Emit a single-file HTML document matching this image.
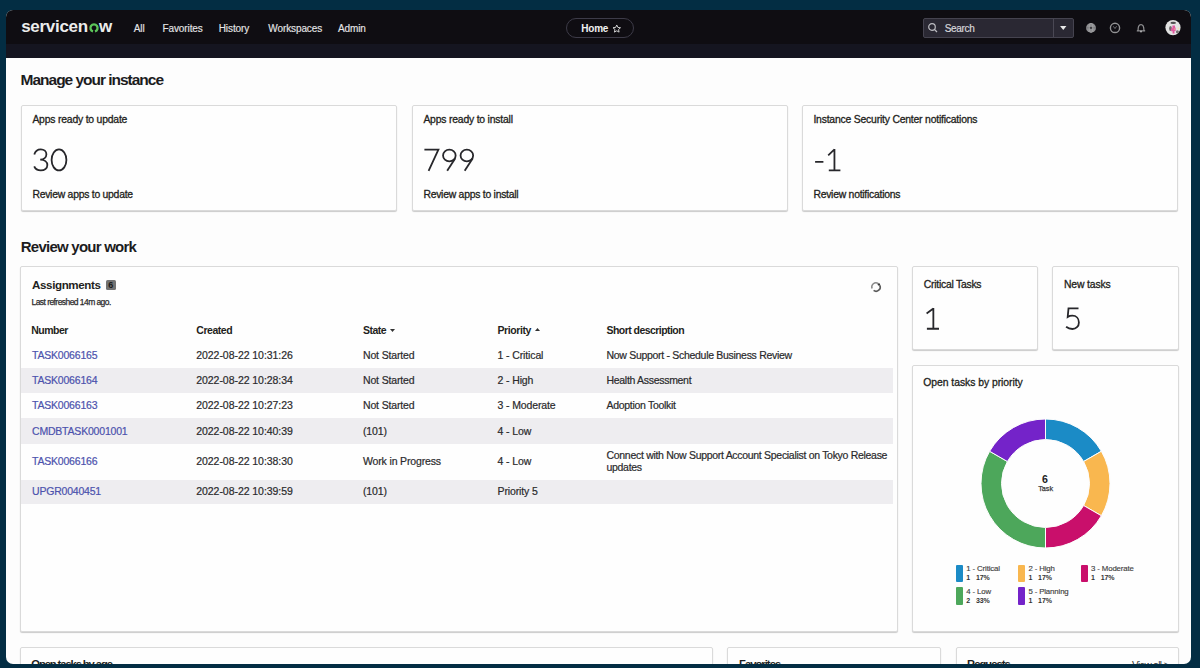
<!DOCTYPE html>
<html><head><meta charset="utf-8"><style>
html,body{margin:0;padding:0;}
body{width:1200px;height:668px;overflow:hidden;background:#032d43;position:relative;font-family:"Liberation Sans",sans-serif;}
#frame{position:absolute;left:6px;top:10px;width:1185px;height:653.6px;border-radius:7px;overflow:hidden;background:#fdfdfd;}
#nav{position:absolute;left:0;top:0;width:1186px;height:34px;background:#0f0d12;}
#band{position:absolute;left:0;top:34px;width:1186px;height:14px;background:#151520;}
#content{position:absolute;left:-6px;top:-10px;width:1200px;height:668px;}
.t{position:absolute;line-height:1;white-space:nowrap;}
.b{position:absolute;}
.card{position:absolute;background:#fefefe;border:1px solid #dadada;border-radius:2px;box-sizing:border-box;box-shadow:0 1px 1px rgba(0,0,0,.2);}
</style></head><body>
<div id="frame"><div id="nav"></div><div id="band"></div>
<div id="content">
<div class="t" style="left:21.20px;top:18.11px;font-size:17px;color:#ececec;font-weight:700;letter-spacing:-0.3px;">servicen</div>
<svg class="b" style="left:88px;top:21.6px" width="12" height="12" viewBox="0 0 12 12"><path d="M5 9.45A3.6 3.6 0 1 1 7 9.45" fill="none" stroke="#5cc55a" stroke-width="2.4"/></svg>
<div class="t" style="left:99.00px;top:18.11px;font-size:17px;color:#ececec;font-weight:700;letter-spacing:0px;">w</div>
<div class="t" style="left:133.75px;top:23.93px;font-size:10px;color:#e4e4e6;font-weight:400;letter-spacing:-0.1px;-webkit-text-stroke:0.15px #e4e4e6;">All</div>
<div class="t" style="left:162.50px;top:23.93px;font-size:10px;color:#e4e4e6;font-weight:400;letter-spacing:-0.1px;-webkit-text-stroke:0.15px #e4e4e6;">Favorites</div>
<div class="t" style="left:218.75px;top:23.93px;font-size:10px;color:#e4e4e6;font-weight:400;letter-spacing:-0.1px;-webkit-text-stroke:0.15px #e4e4e6;">History</div>
<div class="t" style="left:268.30px;top:23.93px;font-size:10px;color:#e4e4e6;font-weight:400;letter-spacing:-0.1px;-webkit-text-stroke:0.15px #e4e4e6;">Workspaces</div>
<div class="t" style="left:337.90px;top:23.93px;font-size:10px;color:#e4e4e6;font-weight:400;letter-spacing:-0.1px;-webkit-text-stroke:0.15px #e4e4e6;">Admin</div>
<div class="b" style="left:566px;top:18px;width:68px;height:20px;border:1px solid #3d3b48;border-radius:11px;box-sizing:border-box;"></div>
<div class="t" style="left:581.25px;top:24.14px;font-size:10px;color:#f0f0f0;font-weight:700;letter-spacing:-0.2px;">Home</div>
<svg class="b" style="left:612px;top:23.6px" width="9.5" height="9.5" viewBox="0 0 24 24"><path d="M12 2.5l2.9 6.2 6.6.7-5 4.5 1.4 6.6L12 17.2l-5.9 3.3 1.4-6.6-5-4.5 6.6-.7z" fill="none" stroke="#d8d8d8" stroke-width="2.4" stroke-linejoin="round"/></svg>
<div class="b" style="left:923px;top:18px;width:151px;height:20px;background:#2a2833;border:1px solid #45434f;border-radius:2px;box-sizing:border-box;"></div>
<div class="b" style="left:1053px;top:19px;width:1px;height:18px;background:#4a4854;"></div>
<svg class="b" style="left:927px;top:22px" width="12" height="12" viewBox="0 0 12 12"><circle cx="5" cy="5" r="3.3" fill="none" stroke="#bdbdc2" stroke-width="1.2"/><path d="M7.4 7.4L10 10" stroke="#bdbdc2" stroke-width="1.3"/></svg>
<div class="t" style="left:944.70px;top:24.14px;font-size:10px;color:#d6d6da;font-weight:400;letter-spacing:-0.3px;-webkit-text-stroke:0.2px #d6d6da;">Search</div>
<svg class="b" style="left:1060px;top:26px" width="6.5" height="4" viewBox="0 0 8 5"><path d="M0 0h8L4 5z" fill="#e8e8e8"/></svg>
<svg class="b" style="left:1085.2px;top:22.1px" width="12" height="12" viewBox="0 0 12 12"><circle cx="6" cy="5.9" r="4.9" fill="#8f8f92"/><path d="M1.3 5.9h9.4" stroke="#6a6a6e" stroke-width=".8"/><ellipse cx="6" cy="5.9" rx="1.9" ry="4.7" fill="none" stroke="#a6a6a8" stroke-width=".7"/><circle cx="6" cy="5.9" r="1.1" fill="#3a3a3e"/></svg>
<svg class="b" style="left:1109.3px;top:22.1px" width="12" height="12" viewBox="0 0 12 12"><circle cx="6" cy="5.9" r="4.6" fill="none" stroke="#929294" stroke-width="1.4"/><path d="M4.3 4.3L6 6.6L7.6 4.2" fill="none" stroke="#6e6e72" stroke-width="1"/></svg>
<svg class="b" style="left:1134.5px;top:22px" width="12" height="12" viewBox="0 0 12 12"><path d="M3.1 8.1C3.1 5.3 3.6 2.6 6 2.6C8.4 2.6 8.9 5.3 8.9 8.1L9.7 8.9H2.3Z" fill="none" stroke="#8e8e90" stroke-width="1.25" stroke-linejoin="round"/><circle cx="6" cy="9.6" r="1" fill="#b0b0b2"/></svg>
<svg class="b" style="left:1164.9px;top:20.4px" width="16" height="16" viewBox="0 0 16 16"><circle cx="8" cy="7.6" r="7.6" fill="#e2e2e2"/><ellipse cx="8.2" cy="2.9" rx="2.8" ry="1.1" fill="#4e4e4e"/><ellipse cx="5.5" cy="8.6" rx="1.4" ry="2.5" fill="#6a6a6a"/><ellipse cx="12.4" cy="11.8" rx="1.5" ry="1.5" fill="#707070"/><path d="M7.4 5.4h2.6v2.2h.6v3.4h-1.1v2.5H7.6v-2.2H6.1V8.2h1.3z" fill="#e0579f"/><circle cx="9.4" cy="9" r=".6" fill="#f2d070"/><ellipse cx="13.4" cy="8.4" rx=".7" ry="1" fill="#eee2b0"/></svg>
<div class="t" style="left:20.60px;top:72.18px;font-size:15.5px;color:#1c1c1e;font-weight:700;letter-spacing:-1.02px;">Manage your instance</div>
<div class="card" style="left:21px;top:105px;width:376px;height:106px;"></div>
<div class="t" style="left:32.40px;top:114.60px;font-size:10.4px;color:#1e1e20;font-weight:400;letter-spacing:-0.2px;-webkit-text-stroke:0.3px currentColor;">Apps ready to update</div>
<div class="t" style="left:32.40px;top:189.60px;font-size:10.4px;color:#1e1e20;font-weight:400;letter-spacing:-0.25px;-webkit-text-stroke:0.3px currentColor;">Review apps to update</div>
<div class="card" style="left:412px;top:105px;width:376px;height:106px;"></div>
<div class="t" style="left:423.40px;top:114.60px;font-size:10.4px;color:#1e1e20;font-weight:400;letter-spacing:-0.2px;-webkit-text-stroke:0.3px currentColor;">Apps ready to install</div>
<div class="t" style="left:423.40px;top:189.60px;font-size:10.4px;color:#1e1e20;font-weight:400;letter-spacing:-0.25px;-webkit-text-stroke:0.3px currentColor;">Review apps to install</div>
<div class="card" style="left:802px;top:105px;width:376px;height:106px;"></div>
<div class="t" style="left:813.40px;top:114.60px;font-size:10.4px;color:#1e1e20;font-weight:400;letter-spacing:-0.2px;-webkit-text-stroke:0.3px currentColor;">Instance Security Center notifications</div>
<div class="t" style="left:813.40px;top:189.60px;font-size:10.4px;color:#1e1e20;font-weight:400;letter-spacing:-0.25px;-webkit-text-stroke:0.3px currentColor;">Review notifications</div>
<div class="t" style="left:20.80px;top:238.90px;font-size:15px;color:#1c1c1e;font-weight:700;letter-spacing:-0.76px;">Review your work</div>
<div class="card" style="left:20px;top:266px;width:878px;height:366px;"></div>
<div class="t" style="left:32.00px;top:278.93px;font-size:11.6px;color:#1f1f21;font-weight:700;letter-spacing:-0.38px;">Assignments</div>
<div class="b" style="left:105.6px;top:279.8px;width:10.400000000000006px;height:10.0px;background:#737373;border-radius:1.5px;"></div>
<div class="t" style="left:108.20px;top:280.58px;font-size:9px;color:#1a1a1a;font-weight:700;letter-spacing:0px;">6</div>
<div class="t" style="left:31.50px;top:298.40px;font-size:8.5px;color:#2b2b2b;font-weight:400;letter-spacing:-0.56px;-webkit-text-stroke:0.25px #2b2b2b;">Last refreshed 14m ago.</div>
<svg class="b" style="left:869.1px;top:279.5px" width="14" height="14" viewBox="0 0 14 14"><path d="M9.1 3.36A4.2 4.2 0 0 0 3.05 8.44" fill="none" stroke="#8a8a8a" stroke-width="1.5"/><path d="M4.59 10.44A4.2 4.2 0 0 0 10.81 5.22" fill="none" stroke="#5a5a5a" stroke-width="1.6"/><circle cx="9.9" cy="4.4" r="1.2" fill="#3a3a3a"/></svg>
<div class="b" style="left:21px;top:368px;width:871.5px;height:25px;background:#eeedf0;"></div>
<div class="b" style="left:21px;top:418.3px;width:871.5px;height:25.899999999999977px;background:#eeedf0;"></div>
<div class="b" style="left:21px;top:479.8px;width:871.5px;height:24.399999999999977px;background:#eeedf0;"></div>
<div class="t" style="left:31.20px;top:324.86px;font-size:10.5px;color:#1f1f21;font-weight:700;letter-spacing:-0.5px;">Number</div>
<div class="t" style="left:196.25px;top:324.86px;font-size:10.5px;color:#1f1f21;font-weight:700;letter-spacing:-0.45px;">Created</div>
<div class="t" style="left:363.00px;top:324.86px;font-size:10.5px;color:#1f1f21;font-weight:700;letter-spacing:-0.5px;">State</div>
<svg class="b" style="left:390px;top:328.5px" width="5" height="3" viewBox="0 0 5 3"><path d="M0 0h5L2.5 3z" fill="#333"/></svg>
<div class="t" style="left:497.50px;top:324.86px;font-size:10.5px;color:#1f1f21;font-weight:700;letter-spacing:-0.4px;">Priority</div>
<svg class="b" style="left:535px;top:328px" width="5" height="3" viewBox="0 0 5 3"><path d="M0 3h5L2.5 0z" fill="#333"/></svg>
<div class="t" style="left:606.50px;top:324.86px;font-size:10.5px;color:#1f1f21;font-weight:700;letter-spacing:-0.55px;">Short description</div>
<div class="t" style="left:32.00px;top:349.86px;font-size:10.5px;color:#4c52ad;font-weight:400;letter-spacing:-0.2px;-webkit-text-stroke:0.2px currentColor;">TASK0066165</div>
<div class="t" style="left:196.25px;top:349.86px;font-size:10.5px;color:#2a2a2c;font-weight:400;letter-spacing:-0.05px;-webkit-text-stroke:0.2px currentColor;">2022-08-22 10:31:26</div>
<div class="t" style="left:363.00px;top:349.86px;font-size:10.5px;color:#2a2a2c;font-weight:400;letter-spacing:-0.15px;-webkit-text-stroke:0.2px currentColor;">Not Started</div>
<div class="t" style="left:497.50px;top:349.86px;font-size:10.5px;color:#2a2a2c;font-weight:400;letter-spacing:-0.12px;-webkit-text-stroke:0.2px currentColor;">1 - Critical</div>
<div class="t" style="left:606.50px;top:349.86px;font-size:10.5px;color:#2a2a2c;font-weight:400;letter-spacing:-0.3px;-webkit-text-stroke:0.2px currentColor;">Now Support - Schedule Business Review</div>
<div class="t" style="left:32.00px;top:374.86px;font-size:10.5px;color:#4c52ad;font-weight:400;letter-spacing:-0.2px;-webkit-text-stroke:0.2px currentColor;">TASK0066164</div>
<div class="t" style="left:196.25px;top:374.86px;font-size:10.5px;color:#2a2a2c;font-weight:400;letter-spacing:-0.05px;-webkit-text-stroke:0.2px currentColor;">2022-08-22 10:28:34</div>
<div class="t" style="left:363.00px;top:374.86px;font-size:10.5px;color:#2a2a2c;font-weight:400;letter-spacing:-0.15px;-webkit-text-stroke:0.2px currentColor;">Not Started</div>
<div class="t" style="left:497.50px;top:374.86px;font-size:10.5px;color:#2a2a2c;font-weight:400;letter-spacing:-0.12px;-webkit-text-stroke:0.2px currentColor;">2 - High</div>
<div class="t" style="left:606.50px;top:374.86px;font-size:10.5px;color:#2a2a2c;font-weight:400;letter-spacing:-0.3px;-webkit-text-stroke:0.2px currentColor;">Health Assessment</div>
<div class="t" style="left:32.00px;top:399.86px;font-size:10.5px;color:#4c52ad;font-weight:400;letter-spacing:-0.2px;-webkit-text-stroke:0.2px currentColor;">TASK0066163</div>
<div class="t" style="left:196.25px;top:399.86px;font-size:10.5px;color:#2a2a2c;font-weight:400;letter-spacing:-0.05px;-webkit-text-stroke:0.2px currentColor;">2022-08-22 10:27:23</div>
<div class="t" style="left:363.00px;top:399.86px;font-size:10.5px;color:#2a2a2c;font-weight:400;letter-spacing:-0.15px;-webkit-text-stroke:0.2px currentColor;">Not Started</div>
<div class="t" style="left:497.50px;top:399.86px;font-size:10.5px;color:#2a2a2c;font-weight:400;letter-spacing:-0.12px;-webkit-text-stroke:0.2px currentColor;">3 - Moderate</div>
<div class="t" style="left:606.50px;top:399.86px;font-size:10.5px;color:#2a2a2c;font-weight:400;letter-spacing:-0.3px;-webkit-text-stroke:0.2px currentColor;">Adoption Toolkit</div>
<div class="t" style="left:32.00px;top:425.61px;font-size:10.5px;color:#4c52ad;font-weight:400;letter-spacing:-0.2px;-webkit-text-stroke:0.2px currentColor;">CMDBTASK0001001</div>
<div class="t" style="left:196.25px;top:425.61px;font-size:10.5px;color:#2a2a2c;font-weight:400;letter-spacing:-0.05px;-webkit-text-stroke:0.2px currentColor;">2022-08-22 10:40:39</div>
<div class="t" style="left:363.00px;top:425.61px;font-size:10.5px;color:#2a2a2c;font-weight:400;letter-spacing:-0.15px;-webkit-text-stroke:0.2px currentColor;">(101)</div>
<div class="t" style="left:497.50px;top:425.61px;font-size:10.5px;color:#2a2a2c;font-weight:400;letter-spacing:-0.12px;-webkit-text-stroke:0.2px currentColor;">4 - Low</div>
<div class="t" style="left:32.00px;top:455.81px;font-size:10.5px;color:#4c52ad;font-weight:400;letter-spacing:-0.2px;-webkit-text-stroke:0.2px currentColor;">TASK0066166</div>
<div class="t" style="left:196.25px;top:455.81px;font-size:10.5px;color:#2a2a2c;font-weight:400;letter-spacing:-0.05px;-webkit-text-stroke:0.2px currentColor;">2022-08-22 10:38:30</div>
<div class="t" style="left:363.00px;top:455.81px;font-size:10.5px;color:#2a2a2c;font-weight:400;letter-spacing:-0.15px;-webkit-text-stroke:0.2px currentColor;">Work in Progress</div>
<div class="t" style="left:497.50px;top:455.81px;font-size:10.5px;color:#2a2a2c;font-weight:400;letter-spacing:-0.12px;-webkit-text-stroke:0.2px currentColor;">4 - Low</div>
<div class="t" style="left:32.00px;top:485.91px;font-size:10.5px;color:#4c52ad;font-weight:400;letter-spacing:-0.2px;-webkit-text-stroke:0.2px currentColor;">UPGR0040451</div>
<div class="t" style="left:196.25px;top:485.91px;font-size:10.5px;color:#2a2a2c;font-weight:400;letter-spacing:-0.05px;-webkit-text-stroke:0.2px currentColor;">2022-08-22 10:39:59</div>
<div class="t" style="left:363.00px;top:485.91px;font-size:10.5px;color:#2a2a2c;font-weight:400;letter-spacing:-0.15px;-webkit-text-stroke:0.2px currentColor;">(101)</div>
<div class="t" style="left:497.50px;top:485.91px;font-size:10.5px;color:#2a2a2c;font-weight:400;letter-spacing:-0.12px;-webkit-text-stroke:0.2px currentColor;">Priority 5</div>
<div class="t" style="left:606.50px;top:450.41px;font-size:10.5px;color:#2a2a2c;font-weight:400;letter-spacing:-0.3px;-webkit-text-stroke:0.2px currentColor;">Connect with Now Support Account Specialist on Tokyo Release</div>
<div class="t" style="left:606.50px;top:462.41px;font-size:10.5px;color:#2a2a2c;font-weight:400;letter-spacing:-0.3px;-webkit-text-stroke:0.2px currentColor;">updates</div>
<div class="card" style="left:912px;top:266px;width:126px;height:84px;"></div>
<div class="card" style="left:1052px;top:266px;width:127px;height:84px;"></div>
<div class="t" style="left:923.80px;top:279.60px;font-size:10.4px;color:#1e1e20;font-weight:400;letter-spacing:-0.25px;-webkit-text-stroke:0.3px currentColor;">Critical Tasks</div>
<div class="t" style="left:1064.00px;top:279.60px;font-size:10.4px;color:#1e1e20;font-weight:400;letter-spacing:-0.15px;-webkit-text-stroke:0.3px currentColor;">New tasks</div>
<div class="card" style="left:912px;top:365px;width:267px;height:267px;"></div>
<div class="t" style="left:923.30px;top:378.00px;font-size:10.4px;color:#1e1e20;font-weight:400;letter-spacing:-0.05px;-webkit-text-stroke:0.3px currentColor;">Open tasks by priority</div>
<svg class="b" style="left:979.8px;top:418.3px" width="131.0" height="131.0" viewBox="-65.5 -65.5 131.0 131.0"><path d="M0.00 -64.50A64.5 64.5 0 0 1 55.86 -32.25L38.11 -22.00A44 44 0 0 0 0.00 -44.00Z" fill="#1b8bc6" stroke="#fdfdfd" stroke-width="1"/><path d="M55.86 -32.25A64.5 64.5 0 0 1 55.86 32.25L38.11 22.00A44 44 0 0 0 38.11 -22.00Z" fill="#f9b74f" stroke="#fdfdfd" stroke-width="1"/><path d="M55.86 32.25A64.5 64.5 0 0 1 0.00 64.50L0.00 44.00A44 44 0 0 0 38.11 22.00Z" fill="#c90f6b" stroke="#fdfdfd" stroke-width="1"/><path d="M0.00 64.50A64.5 64.5 0 0 1 -55.86 -32.25L-38.11 -22.00A44 44 0 0 0 0.00 44.00Z" fill="#4da75b" stroke="#fdfdfd" stroke-width="1"/><path d="M-55.86 -32.25A64.5 64.5 0 0 1 -0.00 -64.50L-0.00 -44.00A44 44 0 0 0 -38.11 -22.00Z" fill="#7423c9" stroke="#fdfdfd" stroke-width="1"/></svg>
<div class="t" style="left:1042.00px;top:473.63px;font-size:10.6px;color:#222;font-weight:700;letter-spacing:0px;">6</div>
<div class="t" style="left:1038.20px;top:485.02px;font-size:7.3px;color:#3a3a3a;font-weight:400;letter-spacing:-0.05px;-webkit-text-stroke:0.25px #3a3a3a;">Task</div>
<div class="b" style="left:955.75px;top:564.6px;width:7.5px;height:17.5px;background:#1b8bc6;border-radius:1px;"></div>
<div class="t" style="left:966.25px;top:564.60px;font-size:7.8px;color:#3e3e3e;font-weight:400;letter-spacing:-0.12px;-webkit-text-stroke:0.15px #3e3e3e;">1 - Critical</div>
<div class="t" style="left:966.25px;top:574.47px;font-size:7px;color:#333;font-weight:700;letter-spacing:0px;">1</div>
<div class="t" style="left:975.95px;top:574.47px;font-size:7px;color:#333;font-weight:700;letter-spacing:-0.1px;">17%</div>
<div class="b" style="left:1017.9px;top:564.6px;width:7.500000000000114px;height:17.5px;background:#f9b74f;border-radius:1px;"></div>
<div class="t" style="left:1028.40px;top:564.60px;font-size:7.8px;color:#3e3e3e;font-weight:400;letter-spacing:-0.12px;-webkit-text-stroke:0.15px #3e3e3e;">2 - High</div>
<div class="t" style="left:1028.40px;top:574.47px;font-size:7px;color:#333;font-weight:700;letter-spacing:0px;">1</div>
<div class="t" style="left:1038.10px;top:574.47px;font-size:7px;color:#333;font-weight:700;letter-spacing:-0.1px;">17%</div>
<div class="b" style="left:1080.5px;top:564.6px;width:7.5px;height:17.5px;background:#c90f6b;border-radius:1px;"></div>
<div class="t" style="left:1091.00px;top:564.60px;font-size:7.8px;color:#3e3e3e;font-weight:400;letter-spacing:-0.12px;-webkit-text-stroke:0.15px #3e3e3e;">3 - Moderate</div>
<div class="t" style="left:1091.00px;top:574.47px;font-size:7px;color:#333;font-weight:700;letter-spacing:0px;">1</div>
<div class="t" style="left:1100.70px;top:574.47px;font-size:7px;color:#333;font-weight:700;letter-spacing:-0.1px;">17%</div>
<div class="b" style="left:955.75px;top:587.4px;width:7.5px;height:17.5px;background:#4da75b;border-radius:1px;"></div>
<div class="t" style="left:966.25px;top:588.00px;font-size:7.8px;color:#3e3e3e;font-weight:400;letter-spacing:-0.12px;-webkit-text-stroke:0.15px #3e3e3e;">4 - Low</div>
<div class="t" style="left:966.25px;top:597.27px;font-size:7px;color:#333;font-weight:700;letter-spacing:0px;">2</div>
<div class="t" style="left:975.95px;top:597.27px;font-size:7px;color:#333;font-weight:700;letter-spacing:-0.1px;">33%</div>
<div class="b" style="left:1017.9px;top:587.4px;width:7.500000000000114px;height:17.5px;background:#7423c9;border-radius:1px;"></div>
<div class="t" style="left:1028.40px;top:588.00px;font-size:7.8px;color:#3e3e3e;font-weight:400;letter-spacing:-0.12px;-webkit-text-stroke:0.15px #3e3e3e;">5 - Planning</div>
<div class="t" style="left:1028.40px;top:597.27px;font-size:7px;color:#333;font-weight:700;letter-spacing:0px;">1</div>
<div class="t" style="left:1038.10px;top:597.27px;font-size:7px;color:#333;font-weight:700;letter-spacing:-0.1px;">17%</div>
<svg class="b" style="left:0;top:0" width="1200" height="668" viewBox="0 0 1200 668"><g fill="none" stroke="#27272b" stroke-width="1.8"><path d="M34.3 154.6C35.3 150.9 38 149.35 40.8 149.35C44 149.35 46.4 151.4 46.4 154.3C46.4 157.4 43.8 159.6 40.2 159.6C44.5 159.6 47.35 162 47.35 165.1C47.35 168.4 44.5 170.45 40.8 170.45C37.6 170.45 35.2 168.8 34.2 166.4"/><ellipse cx="59" cy="159.9" rx="7.4" ry="10.55"/><path d="M424.4 149.6H438.4L428.6 170.8"/><ellipse cx="449.35" cy="155.5" rx="6.3" ry="5.9"/><path d="M455.3 158.2L447.2 170.8"/><ellipse cx="466.85" cy="155.5" rx="6.3" ry="5.9"/><path d="M472.8 158.2L464.7 170.8"/><path d="M815.1 161.9H823.4"/><path d="M834.45 149V171.3M828.8 170.45H840.4M828.2 155.3L834.45 149.4"/><path d="M933.35 308V329.6M926.9 328.75H939M926.6 313.5L933.35 308.6"/><path d="M1078.5 308.4H1068.5L1067.7 316.9C1069 316 1070.8 315.6 1072.4 315.6C1076.2 315.6 1078.9 318.4 1078.9 322.4C1078.9 326.4 1076 329 1072.4 329C1069.8 329 1067.6 328 1066.1 326.8"/></g></svg>
<div class="card" style="left:20px;top:647px;width:693px;height:54px;"></div>
<div class="card" style="left:727px;top:647px;width:214px;height:54px;"></div>
<div class="card" style="left:956px;top:647px;width:223px;height:54px;"></div>
<div class="t" style="left:31.30px;top:658.52px;font-size:11.2px;color:#1f1f21;font-weight:700;letter-spacing:-1.08px;">Open tasks by age</div>
<div class="t" style="left:739.00px;top:658.52px;font-size:11.2px;color:#1f1f21;font-weight:700;letter-spacing:-0.95px;">Favorites</div>
<div class="t" style="left:967.00px;top:658.52px;font-size:11.2px;color:#1f1f21;font-weight:700;letter-spacing:-0.95px;">Requests</div>
<div class="t" style="left:1132.00px;top:661.03px;font-size:10px;color:#333;font-weight:400;letter-spacing:-0.6px;">View all &gt;</div>

</div></div>
</body></html>
